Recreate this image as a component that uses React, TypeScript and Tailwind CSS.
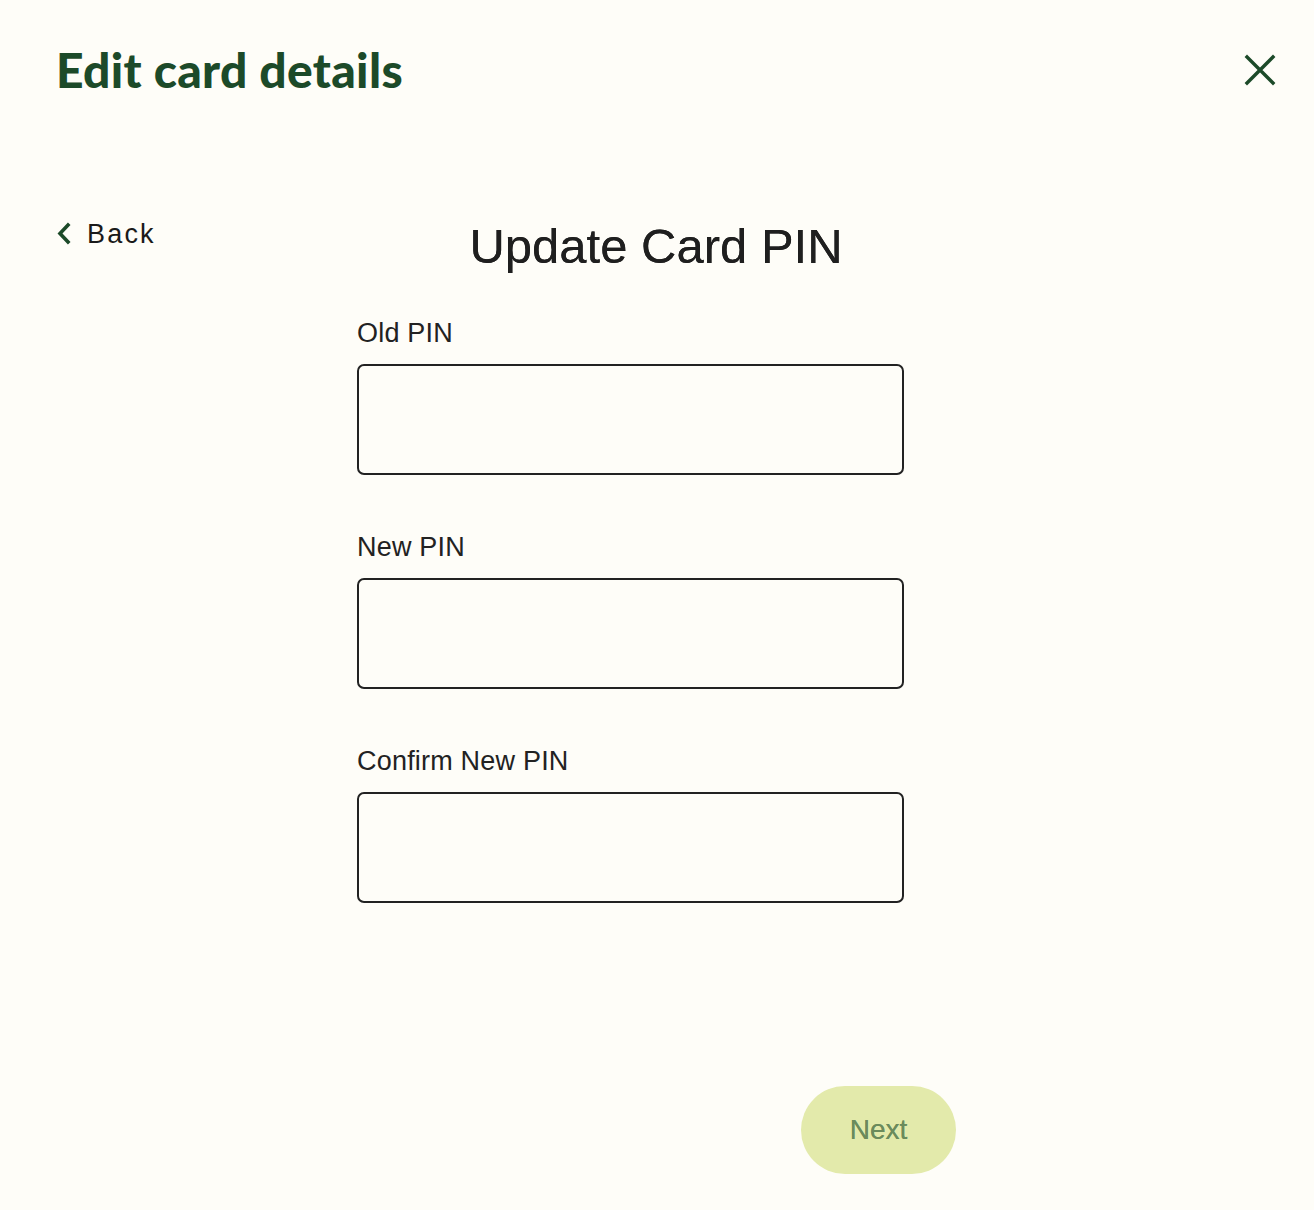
import React from "react";

function Field({ label }: { label: string }) {
  return (
    <div className="flex flex-col">
      <label className="text-[27px] leading-[30px] text-[#222] font-['Liberation_Sans',sans-serif] tracking-[0.2px] mb-[16px]">
        {label}
      </label>
      <input
        type="password"
        className="w-[547px] h-[111px] border-2 border-[#222] rounded-[7px] bg-transparent outline-none px-4 text-2xl"
      />
    </div>
  );
}

export default function App() {
  return (
    <div className="min-h-[1210px] w-full bg-[#fefdf8] font-['Liberation_Sans',sans-serif] relative">
      <div className="flex items-start justify-between pl-[56px] pr-[38px] pt-[42px]">
        <h1 className="text-[48px] leading-[56px] font-black text-[#1c4a29] font-['Lato',sans-serif] tracking-[0.3px]">
          Edit card details
        </h1>
        <button className="mt-[12px] text-[#1c4a29]" aria-label="Close">
          <svg width="32" height="32" viewBox="0 0 32 32" fill="none" stroke="currentColor" strokeWidth="3.4" strokeLinecap="square">
            <path d="M3 3 L29 29 M29 3 L3 29" />
          </svg>
        </button>
      </div>

      <div className="flex pl-[56px] mt-[114px]">
        <button className="flex items-center gap-[15px] h-[28px] mt-[8px] w-[301px] shrink-0 self-start">
          <svg width="16" height="24" viewBox="0 0 16 24" fill="none" stroke="#1c4a29" strokeWidth="3.6" strokeLinecap="square">
            <path d="M12 3 L4 11.5 L12 20" />
          </svg>
          <span className="text-[27px] leading-[28px] tracking-[2.2px] text-[#1a1a1a]">Back</span>
        </button>
        <div className="flex flex-col">
          <h2 className="text-[49px] leading-[56px] text-[#1f1f1f] text-center w-[600px] -ml-[1px] mt-[6px] font-['Liberation_Sans',sans-serif] [text-shadow:0_0_0.6px_#1f1f1f]">
            Update Card PIN
          </h2>
          <div className="flex flex-col gap-[57px] mt-[44px]">
            <Field label="Old PIN" />
            <Field label="New PIN" />
            <Field label="Confirm New PIN" />
          </div>
          <div className="flex justify-end w-[599px] mt-[183px]">
            <button className="w-[155px] h-[88px] rounded-full bg-[#e3eaab] text-[#6b8b5c] text-[28px] font-['Liberation_Sans',sans-serif] [text-shadow:0_0_0.5px_#6b8b5c]">
              Next
            </button>
          </div>
        </div>
      </div>
    </div>
  );
}
